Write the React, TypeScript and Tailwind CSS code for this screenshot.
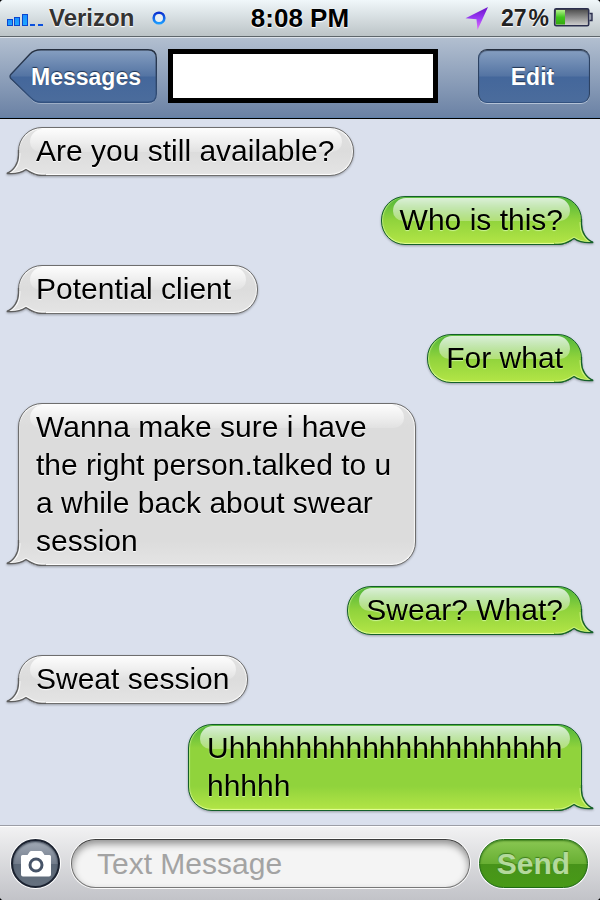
import { useState } from "react";
import clsx from "clsx";

interface Message {
  id: number;
  mine: boolean;
  text: string;
}

const messages: Message[] = [
  { id: 1, mine: false, text: "Are you still available?" },
  { id: 2, mine: true, text: "Who is this?" },
  { id: 3, mine: false, text: "Potential client\u00a0" },
  { id: 4, mine: true, text: "For what" },
  { id: 5, mine: false, text: "Wanna make sure i have the right person.talked to u a while back about swear session" },
  { id: 6, mine: true, text: "Swear? What?" },
  { id: 7, mine: false, text: "Sweat session" },
  { id: 8, mine: true, text: "Uhhhhhhhhhhhhhhhhhhhhhhhhh" },
];

function StatusBar() {
  return (
    <header className="grid h-[37px] grid-cols-[1fr_auto_1fr] items-center border-b border-[#5d666b] bg-linear-to-b from-[#f0f7fa] to-[#bcc4c7] px-[7px] font-bold [text-shadow:0_1px_1px_#fff,0_0_2px_#fff]">
      <div className="flex items-center">
        <svg width="38" height="18" viewBox="0 0 38 18" aria-hidden="true">
          <defs>
            <linearGradient id="bar" x1="0" y1="0" x2="0" y2="1">
              <stop offset="0" stopColor="#1b8fff" />
              <stop offset="1" stopColor="#1fa9ff" />
            </linearGradient>
          </defs>
          <g stroke="#0b46cf" fill="url(#bar)">
            <rect x="0.5" y="10.5" width="5" height="6" />
            <rect x="7.5" y="8.5" width="5" height="8" />
            <rect x="15.5" y="5.5" width="5" height="11" />
          </g>
          <path d="M23 16h5M31 16h5" stroke="#0b50dd" strokeWidth="2" />
        </svg>
        <span className="ml-1 text-2xl leading-9 text-[#333]">Verizon</span>
        <svg className="ml-[17px]" width="16" height="16" viewBox="0 0 16 16" aria-hidden="true">
          <defs>
            <linearGradient id="ring" x1="0" y1="0" x2="0" y2="1">
              <stop offset="0" stopColor="#0a2fd0" />
              <stop offset="1" stopColor="#1b9bff" />
            </linearGradient>
          </defs>
          <circle cx="8" cy="8" r="5.3" fill="#e9eff2" stroke="url(#ring)" strokeWidth="2.6" />
        </svg>
      </div>
      <span className="text-[26px] leading-9 text-black">8:08 PM</span>
      <div className="flex items-center justify-end">
        <svg width="24" height="26" viewBox="0 0 24 26" aria-hidden="true">
          <defs>
            <linearGradient id="loc" x1="0" y1="0" x2="0" y2="1">
              <stop offset="0" stopColor="#6a10c8" />
              <stop offset="0.5" stopColor="#9a3cf5" />
              <stop offset="1" stopColor="#e873fa" />
            </linearGradient>
          </defs>
          <path d="M23 2 0.5 13.2 11.5 14.2 12.5 25Z" fill="url(#loc)" />
        </svg>
        <span className="ml-3 flex gap-[2px] text-[23px] leading-9 text-[#222]">
          <span>27</span>
          <span>%</span>
        </span>
        <svg className="ml-1" width="40" height="22" viewBox="0 0 40 22" aria-hidden="true">
          <defs>
            <linearGradient id="empty" x1="0" y1="0" x2="0" y2="1">
              <stop offset="0" stopColor="#484848" />
              <stop offset="1" stopColor="#d2d2d2" />
            </linearGradient>
            <linearGradient id="charge" x1="0" y1="0" x2="0" y2="1">
              <stop offset="0" stopColor="#b4f08c" />
              <stop offset="0.5" stopColor="#3fc51c" />
              <stop offset="1" stopColor="#35a80f" />
            </linearGradient>
          </defs>
          <rect x="1.7" y="1.7" width="34" height="17" rx="1.5" fill="url(#empty)" stroke="#2b2f4e" strokeWidth="1.6" />
          <rect x="3" y="3" width="9" height="14.5" fill="url(#charge)" />
          <path d="M36.5 6.5h2.5v7h-2.5" fill="#9aa0b0" stroke="#2b2f4e" strokeWidth="1.4" />
        </svg>
      </div>
    </header>
  );
}

function NavBar() {
  return (
    <nav className="flex h-[82px] items-center gap-[11px] border-t border-b border-t-[#dde3ea] border-b-black bg-linear-to-b from-[#b2bfd0] to-[#6a81a4] pr-[10px] pb-[4px] pl-[9px] text-[23px] font-bold text-white shadow-[inset_0_-1px_0_#5d80ab]">
      <button className="relative h-[54px] w-[148px] pt-[2px] pl-[6px] leading-none [text-shadow:0_-1px_1px_#1f3350]">
        <svg className="absolute inset-0" width="148" height="55" viewBox="0 0 148 55" aria-hidden="true">
          <defs>
            <linearGradient id="back" x1="0" y1="0" x2="0" y2="1">
              <stop offset="0" stopColor="#869fc1" />
              <stop offset="0.5" stopColor="#5474a3" />
              <stop offset="0.52" stopColor="#44679b" />
              <stop offset="1" stopColor="#4b6c9c" />
            </linearGradient>
            <linearGradient id="backEdge" x1="0" y1="0" x2="0" y2="1">
              <stop offset="0" stopColor="#252f3f" />
              <stop offset="1" stopColor="#32517f" />
            </linearGradient>
          </defs>
          <path d="M32 1.7H139Q147.300 1.700 147.300 10V46Q147.300 54.300 139 54.300H32C27 54.300 25 53 22 50L2 30.500Q0.500 28.500 2 26.500" fill="none" stroke="#b4c2d6" strokeOpacity="0.8" />
          <path d="M32 0.700H139Q147.300 0.700 147.300 9V45Q147.300 53.300 139 53.300H32C27 53.300 25 52 22 49L1.800 29.500Q0.300 27.500 1.800 25.500L21 5C24 1.700 27 0.700 32 0.700Z" fill="url(#back)" stroke="url(#backEdge)" strokeWidth="1.400" />
        </svg>
        <span className="relative">Messages</span>
      </button>
      <div className="h-[54px] flex-1 border-[5px] border-black bg-white" />
      <button className="ml-[29px] h-[54px] w-[112px] rounded-[9px] border border-t-[#252f3f] border-x-[#2c4263] border-b-[#32517f] bg-[linear-gradient(#869fc1,#5474a3_50%,#44679b_52%,#4b6c9c)] pt-[2px] pr-[3px] leading-none shadow-[0_1px_0_#b4c2d6,inset_0_1px_1px_#3a4a63] [text-shadow:0_-1px_1px_#1f3350]">
        Edit
      </button>
    </nav>
  );
}

// Covers the lower corner of a bubble: drawn for the left side, flipped for the right
function Tail({ mine }: { mine: boolean }) {
  const fill = mine ? "tailGreen" : "tailGray";
  return (
    <svg
      className={clsx("absolute -bottom-px", mine ? "-right-[13px] -scale-x-100" : "-left-[13px]")}
      width="42"
      height="28"
      viewBox="0 0 42 28"
      aria-hidden="true"
    >
      <defs>
        <linearGradient id={fill} gradientUnits="userSpaceOnUse" x1="0" y1="3" x2="0" y2="27">
          <stop offset="0" stopColor={mine ? "#90d33c" : "#dcdcdc"} />
          <stop offset="1" stopColor={mine ? "#b3e546" : "#e4e4e4"} />
        </linearGradient>
      </defs>
      <path
        d="M12.500 4V7C12.500 15 8 22.500 0.800 25.500C8 26.200 15 25 20 21.500C25 24.500 29 27.500 36 27.500H40V4Z"
        fill={`url(#${fill})`}
      />
      <path
        d="M13.800 5V7C13.800 15 10 21.500 4.500 24.500C10 24.700 15.500 23.500 20 20.200C25 23.300 29 26.200 36 26.200H39"
        fill="none"
        stroke={mine ? "#d6f58a" : "#fff"}
        strokeOpacity="0.8"
        strokeWidth="1.300"
      />
      <path
        d="M12.500 2V7C12.500 15 8 22.500 0.800 25.500C8 26.200 15 25 20 21.500C25 24.500 29 27.500 36 27.500H40"
        fill="none"
        stroke={mine ? "#14602a" : "#5e5e5e"}
        strokeWidth="1.300"
      />
    </svg>
  );
}

function Bubble({ message }: { message: Message }) {
  const { mine, text } = message;
  return (
    <li
      className={clsx(
        "relative rounded-[24px] border pt-1 pb-[5px] text-[30px] leading-[38px] text-black drop-shadow-[0_1px_1px_rgba(0,0,0,0.3)]",
        mine
          ? "max-w-[394px] self-end border-[#14602a] bg-[linear-gradient(#4fb53a,#90d33c_23px,#90d33c_calc(100%-24px),#b3e546)] px-[18px] shadow-[inset_0_-1px_1px_#e6ff9a,inset_1px_0_1px_#b5e878]"
          : "max-w-[398px] self-start border-[#6e6e6e] bg-[linear-gradient(#e2e2e2,#dcdcdc_23px,#dcdcdc_calc(100%-24px),#e4e4e4)] pr-[18px] pl-[17px] shadow-[inset_0_-1px_1px_#fff,inset_0_1px_1px_#fff,inset_-1px_0_1px_#f5f5f5]"
      )}
    >
      <span
        className={clsx(
          "absolute inset-x-[11px] top-px h-[23px] rounded-t-[14px] rounded-b-[11px] bg-linear-to-b",
          mine ? "from-white/80 to-white/30" : "from-white/90 to-white/15"
        )}
      />
      <Tail mine={mine} />
      <p
        className={clsx(
          "relative wrap-break-word",
          mine ? "[text-shadow:0_1px_1px_#cdf59a]" : "[text-shadow:0_1px_1px_#fff]"
        )}
      >
        {text}
      </p>
    </li>
  );
}

function Composer() {
  const [draft, setDraft] = useState("");

  return (
    <form
      onSubmit={e => e.preventDefault()}
      className="flex h-[75px] items-start gap-[9px] border-t border-[#9c9ea6] bg-linear-to-b from-[#f2f2f3] to-[#c2c3c8] pt-[13px] pr-3 pl-[11px] shadow-[inset_0_1px_0_#fff]"
    >
      <button
        type="button"
        aria-label="Camera"
        className="mr-[2px] flex size-[49px] shrink-0 items-center justify-center rounded-full border-2 border-[#1b2230] bg-[linear-gradient(#a3abb7,#737d8c_50%,#5a6676_51%,#66717f)] shadow-[0_0_0_1px_#fff,inset_0_1px_2px_#3a4452]"
      >
        <svg width="32" height="28" viewBox="0 0 32 28" aria-hidden="true">
          <path
            d="M2.500 5H7.500L9.500 2Q10 1 11.500 1H20.500Q22 1 22.500 2L24.500 5H29.500Q31 5 31 6.500V24.500Q31 26.500 29 26.500H3Q1 26.500 1 24.500V6.500Q1 5 2.500 5Z"
            fill="#fff"
          />
          <circle cx="16" cy="15" r="6" fill="#fff" stroke="#475468" strokeWidth="3" />
        </svg>
      </button>
      <input
        type="text"
        aria-label="Text Message"
        placeholder="Text Message"
        value={draft}
        onChange={e => setDraft(e.target.value)}
        className="h-[49px] min-w-0 flex-1 rounded-full border border-t-[#3c3c3c] border-x-[#6a6a6a] border-b-[#777] bg-[#f4f4f4] px-[25px] text-[30px] text-black shadow-[inset_0_4px_7px_rgba(0,0,0,0.4),0_0_0_1px_rgba(255,255,255,0.9)] outline-none placeholder:text-[#a3a3a3]"
      />
      <button
        type="submit"
        className="h-[49px] w-[109px] shrink-0 rounded-full border border-[#1f6b14] bg-[linear-gradient(#8ac753,#68af33_50%,#47931a_51%,#489a17)] text-[30px] leading-none font-bold text-[#b4d99c] shadow-[0_0_0_1px_rgba(255,255,255,0.9),inset_0_1px_2px_#3d7d1c] [text-shadow:0_-1px_1px_#3f7d1c]"
      >
        Send
      </button>
    </form>
  );
}

export default function App() {
  return (
    <div className="min-h-screen bg-black">
      <div className="flex min-h-screen flex-col overflow-hidden rounded-[4px] bg-[#dae0ed] font-['Liberation_Sans',Arial,sans-serif]">
        <StatusBar />
        <NavBar />
        <main className="flex-1">
          <ul className="flex flex-col gap-5 px-[18px] pt-2">
            {messages.map(message => (
              <Bubble key={message.id} message={message} />
            ))}
          </ul>
        </main>
        <Composer />
      </div>
    </div>
  );
}
